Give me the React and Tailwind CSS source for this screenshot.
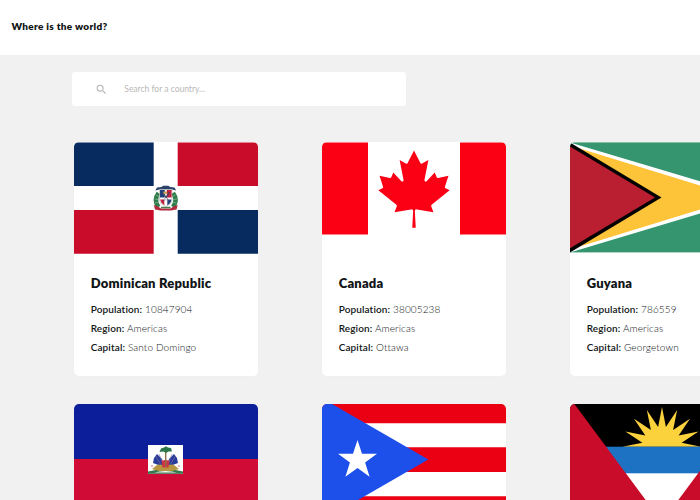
import React from "react";
import { MdSearch } from "react-icons/md";

function DominicanFlag() {
  return (
    <svg className="block w-full" viewBox="0 0 184 111.8">
      <rect width="184" height="111.8" fill="#fff" />
      <path d="M0 .4H79.7V43.9H0zM103.7 68.1H184V111.8H103.7z" fill="#072b5f" />
      <path d="M103.7 .4H184V43.9H103.7zM0 68.1H79.7V111.8H0z" fill="#c90c29" />
      <path d="M81.3 48.5L83 45.5L87.5 45L89 43.8H94.5L96 45L100.5 45.5L102.2 48.5L98 47.5H85.5z" fill="#2b426b" />
      <path d="M84.5 51Q79.3 58 84.5 65M99 51Q104.2 58 99 65" fill="none" stroke="#2f7d4b" strokeWidth="4.6" />
      <path d="M82 53l3 1.5M80.5 57l4 .5M81 61l4-1M101.5 53l-3 1.5M103 57l-4 .5M102.5 61l-4-1" stroke="#9cc4a6" strokeWidth=".6" />
      <path d="M85.5 47.5H98V58.5Q97.5 62.5 91.8 64.5Q86 62.5 85.5 58.5z" fill="#fff" stroke="#999" strokeWidth=".5" />
      <path d="M86 48H90.8V55.5H86zM93.3 57.5H97.5Q97 61.5 93.3 63.3z" fill="#24407a" />
      <path d="M92.8 48H97.6V55.5H92.8zM86 57.5H90.3V63.3Q87 61.5 86 57.5z" fill="#c32140" />
      <path d="M88.5 50L94 58M95.5 50L89.5 59" stroke="#3c4566" strokeWidth="1.1" />
      <path d="M89.5 49.500h3.600v2.500H89.5z" fill="#c3a55a" />
      <path d="M90.3 56h3v2.500h-3z" fill="#d9d9df" />
      <path d="M79.8 63L84 64.500L87 66.500H96.500L99.500 64.500L103.700 63L102.500 67.500L97 68.500H86.500L81 67.500z" fill="#b22a3b" />
      <path d="M87 64.800h9.500v1.500H87z" fill="#4b7b51" />
    </svg>
  );
}

function CanadaFlag() {
  return (
    <svg className="block w-full" viewBox="0 0 184 92.4">
      <rect width="184" height="92.4" fill="#fff" />
      <path d="M0 .4H46V92.4H0zM138 .4H184V92.4H138z" fill="#fb0014" />
      <path
        transform="translate(92 46.9) scale(.01917)"
        d="m-90 2030 45-863a95 95 0 0 0-111-98l-859 151 116-320a65 65 0 0 0-20-73l-941-762 212-99a65 65 0 0 0 34-79l-186-572 542 115a65 65 0 0 0 73-38l105-247 423 454a65 65 0 0 0 111-57l-204-1052 327 189a65 65 0 0 0 91-27l332-652 332 652a65 65 0 0 0 91 27l327-189-204 1052a65 65 0 0 0 111 57l423-454 105 247a65 65 0 0 0 73 38l542-115-186 572a65 65 0 0 0 34 79l212 99-941 762a65 65 0 0 0-20 73l116 320-859-151a95 95 0 0 0-111 98l45 863z"
        fill="#fb0014"
      />
    </svg>
  );
}

function GuyanaFlag() {
  return (
    <svg className="block w-full" viewBox="0 0 184 110.4">
      <rect width="184" height="110.4" fill="#fff" />
      <rect y=".4" width="184" height="110" fill="#35956f" />
      <path d="M0 .4L184 55.4L0 110.4z" fill="#fff" />
      <path d="M0 3.4L169 55.4L0 107.4z" fill="#fdc339" />
      <path d="M0 .4L91.5 55.4L0 110.4z" fill="#000" />
      <path d="M0 4.6L85 55.4L0 106.2z" fill="#ba1e31" />
    </svg>
  );
}

function HaitiFlag() {
  return (
    <svg className="block w-full" viewBox="0 0 184 110">
      <rect width="184" height="55" fill="#0c1e9a" />
      <rect y="55" width="184" height="55" fill="#d00b36" />
      <rect x="74" y="41" width="35" height="28.7" fill="#fff" />
      <path d="M74 69.7V67.5Q91.5 63 109 67.5V69.7z" fill="#33774a" />
      <path d="M80 68.5Q91.5 65.5 103 68.5z" fill="#fff" />
      <path d="M78 65L83 61L87 58H96L100 61L105 65L98 67H85z" fill="#b8963f" />
      <path d="M79 59L80 54L83 50L88 55L90 61L83 60.5zM104 59L103 54L100 50L95 55L93 61L100 60.5z" fill="#293b9b" />
      <path d="M81.5 52L87 61M85 50L89 60M101.5 52L96 61M98 50L94 60" stroke="#8b79a0" strokeWidth=".6" />
      <path d="M87.5 57Q91.5 55 95.5 57L94.5 63.5H88.5z" fill="#cf3443" />
      <path d="M91 46H92.4V63H91z" fill="#8c7446" />
      <path d="M85.5 48L87 44.5L90 43.5L92 42.3L94 43.5L97 44L98 47.5L94.5 47.5L92 49L89.5 47.5z" fill="#2e774b" />
      <path d="M77 61.500h2v1h-2zM104 61.500h2v1h-2z" fill="#d76c78" />
    </svg>
  );
}

function PuertoRicoFlag() {
  return (
    <svg className="block w-full" viewBox="0 0 184 111">
      <rect width="184" height="111" fill="#fff" />
      <path d="M0 0H184V19.2H0zM0 43.3H184V67.9H0zM0 92.3H184V111H0z" fill="#eb0013" />
      <path d="M0 -5.8L106.3 55.5L0 116.8z" fill="#1d50eb" />
      <path d="M35.5 36L40 49.7H55L43.1 58.5L47.6 72.7L35.5 64L23.4 72.7L27.9 58.5L16 49.7H31z" fill="#fff" />
    </svg>
  );
}

const sunPoints = Array.from({ length: 17 }, (_, i) => {
  const angle = (Math.PI * i) / 16;
  const radius = i % 2 === 0 ? 39.6 : 20;
  return `${92 - radius * Math.cos(angle)},${42.7 - radius * Math.sin(angle)}`;
}).join(" ");

function AntiguaFlag() {
  return (
    <svg className="block w-full" viewBox="0 0 184 111">
      <rect width="184" height="111" fill="#fff" />
      <rect width="184" height="43" fill="#000" />
      <polygon points={sunPoints} fill="#fbd23c" />
      <rect y="42.7" width="184" height="26.6" fill="#1d72c4" />
      <path d="M0 0H4.4L86.8 111H0zM184 0H179.6L97.2 111H184z" fill="#c90c29" />
    </svg>
  );
}

const countries = [
  { id: "do", name: "Dominican Republic", population: "10847904", capital: "Santo Domingo", Flag: DominicanFlag },
  { id: "ca", name: "Canada", population: "38005238", capital: "Ottawa", Flag: CanadaFlag },
  { id: "gy", name: "Guyana", population: "786559", capital: "Georgetown", Flag: GuyanaFlag },
  { id: "ht", Flag: HaitiFlag },
  { id: "pr", Flag: PuertoRicoFlag },
  { id: "ag", Flag: AntiguaFlag },
];

function Fact({ label, value }) {
  return (
    <p className="h-[19px] whitespace-nowrap text-[10px] leading-[19px] font-light tracking-[0.12px] text-[#111517]">
      <span className="font-semibold">{label}:</span> {value}
    </p>
  );
}

function CountryCard({ name, population, capital, Flag }) {
  return (
    <article className="h-[234px] overflow-hidden rounded-[5px] bg-white shadow-[0_0_7px_rgba(0,0,0,0.015)]">
      <div className="h-[133px]">
        <Flag />
      </div>
      {name && (
        <div className="px-[17px]">
          <h2 className="mb-[9px] h-4 whitespace-nowrap text-[13px] leading-4 font-extrabold tracking-[0.2px] text-[#111517]">
            {name}
          </h2>
          <Fact label="Population" value={population} />
          <Fact label="Region" value="Americas" />
          <Fact label="Capital" value={capital} />
        </div>
      )}
    </article>
  );
}

export default function App() {
  return (
    <div className="h-[500px] w-[700px] overflow-hidden bg-[#f1f1f1] font-['Lato',sans-serif]">
      <header className="flex h-[55px] items-center bg-white pb-[3px] pl-[11.5px]">
        <h1 className="text-[10px] leading-4 font-extrabold tracking-[0.3px] text-[#111517]">Where is the world?</h1>
      </header>
      <main className="pt-[16.7px]">
        <div className="ml-[72.3px] flex h-[34.7px] w-[334px] items-center rounded-[3px] bg-white pl-[23px] shadow-[0_0_6px_rgba(0,0,0,0.01)]">
          <MdSearch className="mt-px size-[13px] text-[#b5b5b5]" />
          <span className="mt-px ml-4 text-[8.5px] text-[#b9b9b9]">Search for a country...</span>
        </div>
        <section className="mt-9 ml-[73.7px] grid w-max grid-cols-[repeat(3,184px)] gap-x-16 gap-y-[28px]">
          {countries.map((country) => (
            <CountryCard key={country.id} {...country} />
          ))}
        </section>
      </main>
    </div>
  );
}
